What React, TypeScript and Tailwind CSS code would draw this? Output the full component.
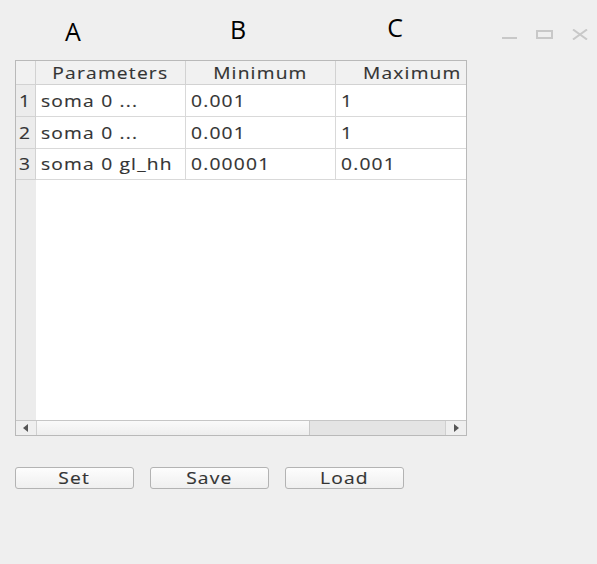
const rows = [
  { n: "1", name: "soma 0 ...", min: "0.001", max: "1", h: "h-[32px]" },
  { n: "2", name: "soma 0 ...", min: "0.001", max: "1", h: "h-[32px]" },
  { n: "3", name: "soma 0 gl_hh", min: "0.00001", max: "0.001", h: "h-[31px]" },
];

const cell = "border-b border-r border-[#d9d9d9] flex items-center pl-[5px] overflow-hidden whitespace-nowrap";

// the screenshot is stretched horizontally, so the glyphs are widened too
const L = ({ children }: { children: React.ReactNode }) => (
  <span className="inline-block origin-left scale-x-[1.2] tracking-[1px]">{children}</span>
);
const C = ({ children }: { children: React.ReactNode }) => (
  <span className="inline-block origin-center scale-x-[1.2] tracking-[1px]">{children}</span>
);

const App = () => {
  return (
    <div
      className="w-[597px] h-[564px] bg-[#efefef] text-[#333] overflow-hidden"
      style={{ fontFamily: '"Open Sans", "Noto Sans", sans-serif' }}
    >
      {/* column letters + window controls */}
      <div className="flex h-[60px]">
        <div className="w-[146px] flex justify-center pt-[19px] text-[25px] leading-none text-black">A</div>
        <div className="w-[184px] flex justify-center pt-[17px] text-[25px] leading-none text-black">B</div>
        <div className="w-[130px] flex justify-center pt-[15px] text-[25px] leading-none text-black">C</div>
        <div className="flex-1 flex items-start gap-[19px] pl-[42px] pt-[29px]">
          <div className="w-[15px] h-[10px] border-b-2 border-[#c8c8c8]" />
          <div className="w-[17px] h-[9px] mt-[1px] border-2 border-[#c8c8c8]" />
          <svg width="16" height="11" viewBox="0 0 16 11">
            <path d="M1 0.5 L15 10.5 M15 0.5 L1 10.5" stroke="#c8c8c8" strokeWidth="2" />
          </svg>
        </div>
      </div>

      {/* table */}
      <div className="ml-[15px] w-[452px] h-[376px] border border-[#b9b9b9] bg-white flex flex-col text-[16px] [-webkit-text-stroke:0.15px_#333]">
        <div className="flex h-[24px] bg-[#f1f1f1] border-b border-[#d2d2d2]">
          <div className="w-[20px] border-r border-[#d2d2d2]" />
          <div className="w-[150px] border-r border-[#d2d2d2] flex items-center justify-center">
            <C>Parameters</C>
          </div>
          <div className="w-[150px] border-r border-[#d2d2d2] flex items-center justify-center">
            <C>Minimum</C>
          </div>
          <div className="flex-1 overflow-hidden flex items-center pl-[27px] whitespace-nowrap">
            <L>Maximum</L>
          </div>
        </div>
        {rows.map((r) => (
          <div key={r.n} className={`flex ${r.h}`}>
            <div className="w-[20px] bg-[#ececec] border-b border-r border-[#d2d2d2] flex items-center justify-center">
              <C>{r.n}</C>
            </div>
            <div className={`w-[150px] ${cell}`}>
              <L>{r.name}</L>
            </div>
            <div className={`w-[150px] ${cell}`}>
              <L>{r.min}</L>
            </div>
            <div className="flex-1 border-b border-[#d9d9d9] flex items-center pl-[5px]">
              <L>{r.max}</L>
            </div>
          </div>
        ))}
        <div className="flex flex-1">
          <div className="w-[20px] bg-[#ececec]" />
          <div className="flex-1" />
        </div>
        {/* horizontal scrollbar */}
        <div className="flex h-[15px] border-t border-[#c6c6c6] bg-[#e4e4e4]">
          <div className="w-[21px] bg-[#efefef] border-r border-[#d0d0d0] flex items-center justify-center">
            <svg width="6" height="8" viewBox="0 0 6 8">
              <path d="M5 0 L0 4 L5 8 Z" fill="#555" />
            </svg>
          </div>
          <div className="w-[273px] bg-gradient-to-b from-[#fafafa] to-[#eeeeee] border-r border-[#c8c8c8]" />
          <div className="flex-1" />
          <div className="w-[21px] bg-[#efefef] border-l border-[#d0d0d0] flex items-center justify-center">
            <svg width="6" height="8" viewBox="0 0 6 8">
              <path d="M1 0 L6 4 L1 8 Z" fill="#555" />
            </svg>
          </div>
        </div>
      </div>

      {/* buttons */}
      <div className="flex gap-[16px] ml-[15px] mt-[31px] text-[16px] [-webkit-text-stroke:0.15px_#333]">
        {["Set", "Save", "Load"].map((b) => (
          <button
            key={b}
            className="w-[119px] h-[22px] rounded-[3px] border border-[#b3b3b3] bg-gradient-to-b from-[#fdfdfd] to-[#efefef] flex items-center justify-center leading-none text-[#333]"
          >
            <C>{b}</C>
          </button>
        ))}
      </div>
    </div>
  );
};

export default App;
